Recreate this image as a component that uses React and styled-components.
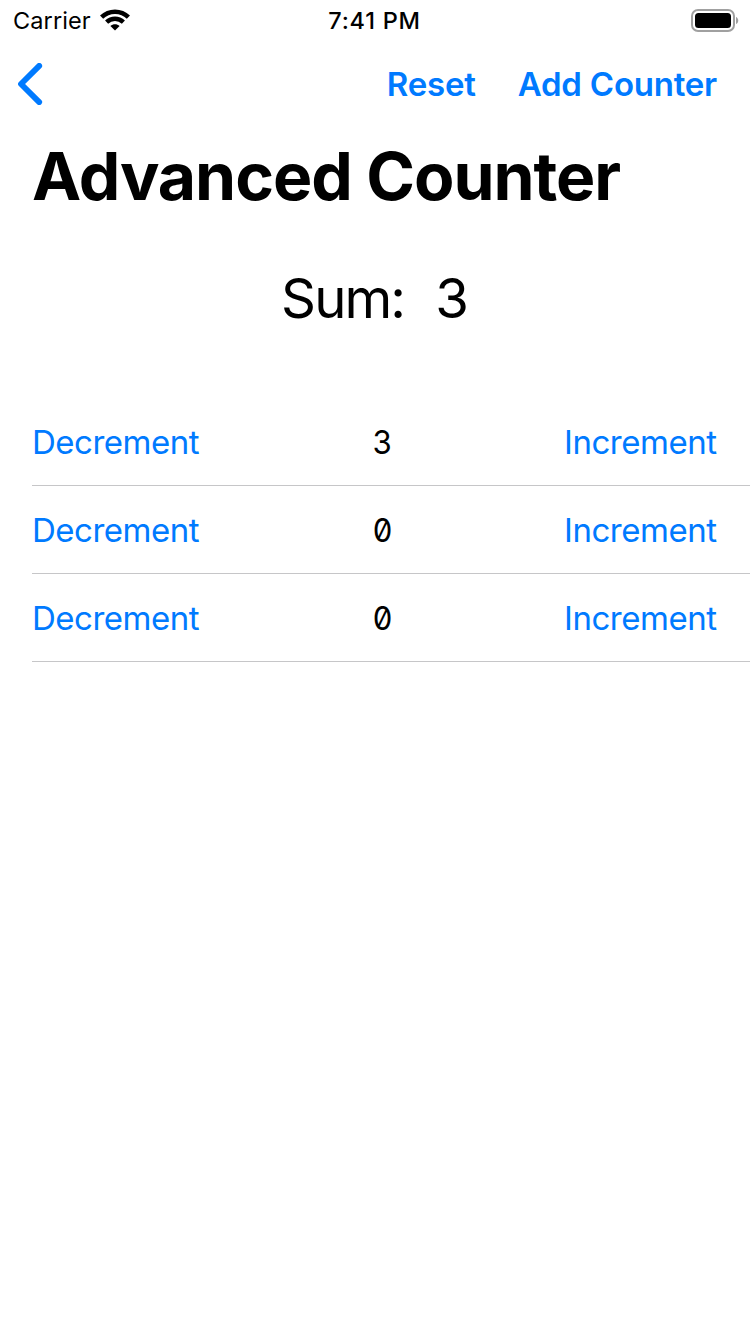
import React from "react";
import styled, { createGlobalStyle } from "styled-components";

const Global = createGlobalStyle`
  * { box-sizing: border-box; }
  body { margin: 0; background: #fff; color: #000; font-family: Inter, "Liberation Sans", sans-serif; }
  button { font: inherit; letter-spacing: inherit; border: 0; padding: 0; background: none; color: #007aff; white-space: nowrap; }
`;
const Screen = styled.main`
  width: 750px; height: 1334px; overflow: hidden; display: flex; flex-direction: column;
`;
const StatusBar = styled.header`
  height: 40px; padding: 0 11px 0 13px; display: grid; grid-template-columns: 1fr auto 1fr; align-items: center;
  font-size: 23.5px; line-height: 38px;
`;
const Carrier = styled.div`
  display: flex; align-items: center; gap: 9.4px; letter-spacing: 0.1px;
`;
const StatusText = styled.span`
  padding-top: 2px;
`;
const Time = styled.time`
  padding-top: 2px; margin-right: 3px; font-weight: 500; letter-spacing: 0.75px;
`;
const Battery = styled.svg`
  justify-self: end; display: block;
`;
const NavBar = styled.nav`
  height: 88px; padding: 0 33px 0 17px; display: flex; align-items: center;
`;
const BackButton = styled.button`
  height: 42px; display: flex;
`;
const Actions = styled.div`
  margin-left: auto; display: flex; gap: 42px;
`;
const NavButton = styled.button`
  && { font-size: 33px; font-weight: 600; letter-spacing: -0.22px; line-height: 44px; }
`;
const Title = styled.h1`
  margin: 0; padding: 7px 32px 0; height: 104px; font-size: 66px; line-height: 82px; font-weight: 700; letter-spacing: -1.05px; white-space: nowrap;
`;
const Sum = styled.div`
  height: 166px; padding: 32px 2px 0 0; display: flex; justify-content: center; gap: 31px;
  font-size: 54.5px; line-height: 68px; letter-spacing: -1.9px;
`;
const List = styled.ul`
  margin: 0; padding: 0 0 0 32px; list-style: none;
`;
const Row = styled.li`
  height: 88px; padding-right: 33.5px; display: flex; align-items: center; justify-content: space-between;
  border-bottom: 1px solid #c6c6c8; font-size: 33px; letter-spacing: -0.48px;
`;
const Value = styled.span`
  width: 21px; padding-left: 2px; display: flex; justify-content: center; letter-spacing: 0;
  font-feature-settings: "zero" 1, "tnum" 1;
  transform: scaleX(0.94);
`;

export default function App() {
  return (
    <Screen>
      <Global />
      <StatusBar>
        <Carrier>
          <StatusText>Carrier</StatusText>
          <svg width="30" height="22" viewBox="0 0 30 22" fill="none" stroke="#000" strokeWidth="4.5">
            <path d="M1.6 8.1C9 .8 21 .8 28.4 8.1M6.6 13.2c4.8-4.5 12-4.5 16.8 0" />
            <path d="M15 21.5l-4.6-4.6c2.6-2.3 6.6-2.3 9.2 0z" fill="#000" stroke="none" />
          </svg>
        </Carrier>
        <Time>7:41 PM</Time>
        <Battery width="48" height="23" viewBox="0 0 48 23">
          <rect x="1" y="1" width="42" height="21" rx="6" fill="none" stroke="#a0a0a0" strokeWidth="2" />
          <rect x="4" y="4" width="36" height="15" rx="3.5" />
          <path d="M45 8c3 1 3 6 0 7z" fill="#a0a0a0" />
        </Battery>
      </StatusBar>
      <NavBar>
        <BackButton aria-label="Back">
          <svg width="27" height="42" viewBox="0 0 27 42" fill="none" stroke="#007aff" strokeWidth="5.8" strokeLinecap="round" strokeLinejoin="round">
            <path d="M22.2 2.9L4 21l18.2 18.1" />
          </svg>
        </BackButton>
        <Actions>
          <NavButton>Reset</NavButton>
          <NavButton>Add Counter</NavButton>
        </Actions>
      </NavBar>
      <Title>Advanced Counter</Title>
      <Sum><span>Sum:</span><span>3</span></Sum>
      <List>
        {[3, 0, 0].map((count, i) => (
          <Row key={i}>
            <button>Decrement</button>
            <Value>{count}</Value>
            <button>Increment</button>
          </Row>
        ))}
      </List>
    </Screen>
  );
}
